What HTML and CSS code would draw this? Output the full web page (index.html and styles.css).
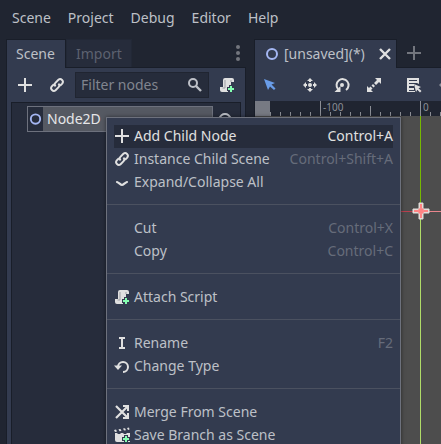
FILE: index.html
```html
<!DOCTYPE html>
<html lang="en">
<head>
<meta charset="utf-8">
<title>Scene editor</title>
<link rel="stylesheet" href="styles.css">
</head>
<body>
<svg class="sprite" aria-hidden="true">
  <symbol id="add" viewBox="0 0 16 16"><path d="M7 1v6H1v2h6v6h2V9h6V7H9V1z"/></symbol>
  <symbol id="link" viewBox="0 0 16 16"><g fill="none" stroke="currentColor" stroke-width="2"><path d="M6.600 9.400a2.700 2.700 0 0 1 0-3.800l2.800-2.800a2.700 2.700 0 0 1 3.800 3.800l-2.200 2.200"/><path d="M9.400 6.600a2.700 2.700 0 0 1 0 3.800l-2.800 2.800a2.700 2.700 0 0 1-3.800-3.800l2.200-2.200"/></g></symbol>
  <symbol id="search" viewBox="0 0 16 16"><g fill="none" stroke="currentColor" stroke-width="2"><circle cx="6" cy="6" r="4"/><path d="M9 9l5 5" stroke-width="2.400"/></g></symbol>
  <symbol id="script" viewBox="0 0 16 16"><path d="M6 1a2 2 0 0 0-2 2v7H1v3a2 2 0 0 0 2 2h6v-4h1V9h2V5h3V3a2 2 0 0 0-2-2z"/><path d="M6 3v8H3.500M12 3v2" fill="none" stroke="#9b9da3"/><path class="plus" d="M11 9h2v2h2v2h-2v2h-2v-2H9v-2h2z"/></symbol>
  <symbol id="ring" viewBox="0 0 16 16"><circle cx="8" cy="8" r="5" fill="none" stroke="#a5b7f3" stroke-width="2"/></symbol>
  <symbol id="eye" viewBox="0 0 16 16"><path d="M2 8q2-5 6-5t6 5q-2 5-6 5T2 8z" fill="none" stroke="currentColor" stroke-width="2"/><circle cx="8" cy="8" r="2"/></symbol>
  <symbol id="dots" viewBox="0 0 16 16"><circle cx="8" cy="2" r="2"/><circle cx="8" cy="8" r="2"/><circle cx="8" cy="14" r="2"/></symbol>
  <symbol id="close" viewBox="0 0 16 16"><path d="M3 3l10 10M13 3L3 13" fill="none" stroke="currentColor" stroke-width="2.400"/></symbol>
  <symbol id="select" viewBox="0 0 16 16"><path d="M2 2l4 11 2-3.500 4 3.500 1.500-1.500-4-4L13 6z"/></symbol>
  <symbol id="move" viewBox="0 0 16 16"><circle cx="8" cy="8" r="2"/><path d="M8 1l3 3H9v1H7V4H5zM8 15l3-3H9v-1H7v1H5zM1 8l3-3v2h1v2H4v2zM15 8l-3-3v2h-1v2h1v2z"/></symbol>
  <symbol id="rotate" viewBox="0 0 16 16"><path d="M12 13a6 6 0 1 0-8-1" fill="none" stroke="currentColor" stroke-width="2"/><path d="M6.500 9v6H.5z"/><circle cx="8" cy="8" r="2"/></symbol>
  <symbol id="scale" viewBox="0 0 16 16"><path d="M9 1h6v6l-2-2-3 3-2-2 3-3zM1 9v6h6l-2-2 1.500-1.500-2-2L3 11z"/><path d="M7 7l2 2-1.500 1.500-2-2z"/></symbol>
  <symbol id="list" viewBox="0 0 16 16"><path fill-rule="evenodd" d="M1 1h12v6l-2-1H3v1h5v2H3v2h5v2H3v1h6v1H1zM3 3v1h8V3z"/><path d="M8 7l7 3-2.500 1.200L15.500 14 14 15.500l-2.700-2.700L10 15z"/></symbol>
  <symbol id="chevron" viewBox="0 0 16 16"><path d="M3 8c2 .500 3.500 3 5 3s3-2.500 5-3" fill="none" stroke="currentColor" stroke-width="2.200" stroke-linecap="round"/></symbol>
  <symbol id="rename" viewBox="0 0 16 16"><path d="M5 2h6v2H9v8h2v2H5v-2h2V4H5z"/></symbol>
  <symbol id="reload" viewBox="0 0 16 16"><path d="M4 9a5 5 0 1 1 5 5" fill="none" stroke="currentColor" stroke-width="2"/><path d="M0 7.500h8l-4 4.500z"/></symbol>
  <symbol id="merge" viewBox="0 0 16 16"><path d="M2 2l11 11M2 14L13 3" fill="none" stroke="currentColor" stroke-width="2.200"/><path d="M9 1h6v6h-2V3H9zM15 9v6H9v-2h4V9z"/></symbol>
  <symbol id="clapper" viewBox="0 0 16 16"><path d="M0 3l2-.5 1 2-2 .5zM4.500 2.300l2-.4 1 2-2 .4zM9 1.600l2-.4 1 2-2 .4zM13 1l2-.4.500 2-1.500.4zM1 6h2l1 1h2l1-1h2l1 1h2l1-1h3v9H3a2 2 0 0 1-2-2z"/><path class="plus" d="M11 9h2v2h2v2h-2v2h-2v-2H9v-2h2z"/></symbol>
</svg>

<nav class="menubar" aria-label="Main">
  <button>Scene</button><button>Project</button><button>Debug</button><button>Editor</button><button>Help</button>
</nav>

<div class="workspace">
  <section class="dock">
    <div class="tabs">
      <button class="tab active first">Scene</button>
      <button class="tab idle">Import</button>
      <button class="dock-menu" aria-label="Dock options"><svg class="icon"><use href="#dots"/></svg></button>
    </div>
    <div class="panel dock-panel">
      <div class="dock-tools">
        <button class="tool" aria-label="Add node"><svg class="icon"><use href="#add"/></svg></button>
        <button class="tool" aria-label="Instance scene"><svg class="icon"><use href="#link"/></svg></button>
        <label class="filter"><input type="text" placeholder="Filter nodes" aria-label="Filter nodes"><svg class="icon"><use href="#search"/></svg></label>
        <button class="tool" aria-label="Attach script"><svg class="icon"><use href="#script"/></svg></button>
      </div>
      <div class="tree">
        <div class="tree-row">
          <button class="node"><svg class="icon"><use href="#ring"/></svg><span>Node2D</span></button>
          <button class="visibility" aria-label="Toggle visibility"><svg class="icon"><use href="#eye"/></svg></button>
        </div>
      </div>
    </div>
  </section>

  <section class="editor">
    <div class="tabs">
      <div class="tab active document"><svg class="icon"><use href="#ring"/></svg><span>[unsaved](*)</span><button class="close" aria-label="Close scene"><svg class="icon"><use href="#close"/></svg></button></div>
      <button class="new-tab" aria-label="New scene"><svg class="icon"><use href="#add"/></svg></button>
    </div>
    <div class="panel editor-panel">
      <div class="editor-tools">
        <button class="tool pressed" aria-label="Select"><svg class="icon"><use href="#select"/></svg></button>
        <span class="divider"></span>
        <button class="tool" aria-label="Move"><svg class="icon"><use href="#move"/></svg></button>
        <button class="tool" aria-label="Rotate"><svg class="icon"><use href="#rotate"/></svg></button>
        <button class="tool" aria-label="Scale"><svg class="icon"><use href="#scale"/></svg></button>
        <span class="divider"></span>
        <button class="tool" aria-label="List select"><svg class="icon"><use href="#list"/></svg></button>
        <button class="tool" aria-label="Pivot"><svg class="icon faint"><use href="#move"/></svg></button>
      </div>
      <div class="ruler">
        <span class="corner"></span>
        <svg class="scale">
          <defs><pattern id="ticks" width="10" height="15" patternUnits="userSpaceOnUse"><path d="M0 11h1v4H0z"/></pattern></defs>
          <rect width="100%" height="15" fill="url(#ticks)"/>
          <path d="M50 0h1v15h-1zM100 5h1v10h-1zM150 0h1v15h-1z"/>
          <text x="53" y="10">-100</text><text x="153" y="10">0</text>
        </svg>
      </div>
      <svg class="canvas">
        <rect x="165" y="0" width="1" height="95" fill="#76b900"/>
        <rect x="165" y="95" width="1" height="100%" fill="#b0dc68"/>
        <rect x="0" y="95" width="165" height="1" fill="#b8404e"/>
        <rect x="166" y="95" width="100%" height="1" fill="#e8858c"/>
        <path d="M164 87h4v16h-4zM158 93h16v4h-16z" fill="#e2dcd8" stroke="#e2dcd8"/>
        <path d="M165 88h2v4h-2zM165 98h2v4h-2zM159 94h4v2h-4zM169 94h4v2h-4z" fill="#ff8484"/>
        <circle cx="166" cy="95" r="3" fill="#ff8484"/>
      </svg>
    </div>
  </section>
</div>

<div class="context-menu" role="menu">
  <button class="item hover" role="menuitem"><svg class="icon"><use href="#add"/></svg><span>Add Child Node</span><kbd>Control+A</kbd></button>
  <button class="item" role="menuitem"><svg class="icon"><use href="#link"/></svg><span>Instance Child Scene</span><kbd>Control+Shift+A</kbd></button>
  <button class="item" role="menuitem"><svg class="icon"><use href="#chevron"/></svg><span>Expand/Collapse All</span></button>
  <hr>
  <button class="item" role="menuitem"><i class="icon"></i><span>Cut</span><kbd>Control+X</kbd></button>
  <button class="item" role="menuitem"><i class="icon"></i><span>Copy</span><kbd>Control+C</kbd></button>
  <hr>
  <button class="item" role="menuitem"><svg class="icon"><use href="#script"/></svg><span>Attach Script</span></button>
  <hr>
  <button class="item" role="menuitem"><svg class="icon"><use href="#rename"/></svg><span>Rename</span><kbd>F2</kbd></button>
  <button class="item" role="menuitem"><svg class="icon"><use href="#reload"/></svg><span>Change Type</span></button>
  <hr>
  <button class="item" role="menuitem"><svg class="icon"><use href="#merge"/></svg><span>Merge From Scene</span></button>
  <button class="item" role="menuitem"><svg class="icon"><use href="#clapper"/></svg><span>Save Branch as Scene</span></button>
</div>
</body>
</html>
```
FILE: styles.css
```css
* { box-sizing: border-box; }

body {
  margin: 0;
  height: 100vh;
  overflow: hidden;
  display: flex;
  flex-direction: column;
  background: #202531;
  color: #bdc0c7;
  font: 14px/22px "Noto Sans", sans-serif;
}

button, input {
  margin: 0;
  padding: 0;
  border: 0;
  background: none;
  color: inherit;
  font: inherit;
  text-align: left;
  white-space: nowrap;
}

.sprite { display: none; }
.icon { display: block; flex: none; width: 16px; height: 16px; fill: currentColor; }
.plus { fill: #84ffb1; stroke: #333b4f; stroke-width: 2; paint-order: stroke; }

.menubar { display: flex; flex: none; gap: 17px; height: 39px; padding: 7px 12px 10px; }

.workspace { flex: 1; min-height: 0; display: flex; gap: 8px; margin-bottom: -8px; padding-left: 6px; }
.dock { flex: none; width: 240px; display: flex; flex-direction: column; }
.editor { flex: 1; min-width: 0; display: flex; flex-direction: column; }

.tabs { display: flex; flex: none; height: 28px; align-items: stretch; }
.tab { padding: 0 9px; border: 1px solid #191e29; border-bottom: 0; }
.tab.active { position: relative; margin-bottom: -1px; background: #333b4f; }
.tab.idle { background: #262c3b; color: #5d6270; border-color: #222836; }
.tab.first { width: 60px; }
.dock-menu { margin-left: auto; color: #73767e; }
.tab.document { display: flex; align-items: center; gap: 4px; width: 143px; padding-right: 3px; }
.close { margin-left: auto; color: #e0e0e0; }
.new-tab { padding: 0 9px; color: #73767e; }

.panel { flex: 1; min-height: 0; display: flex; flex-direction: column; background: #333b4f; border: 1px solid #191e29; }
.tool { flex: none; color: #e0e0e0; }

.dock-panel { padding: 4px; }
.dock-tools { display: flex; flex: none; align-items: center; gap: 16px; height: 26px; padding: 0 6px; }
.filter { flex: 1; min-width: 0; display: flex; align-items: center; height: 26px; margin: 0 -6px; padding: 0 5px; background: #262c3b; border: 1px solid #202531; color: #bdc0c7; }
.filter input { flex: 1; min-width: 0; outline: 0; }
.filter input::placeholder { color: #81858f; opacity: 1; }

.tree { flex: 1; margin-top: 4px; padding: 3px 7px 0 15px; background: #262c3b; border: 1px solid #191e29; }
.tree-row { display: flex; align-items: center; gap: 4px; height: 26px; }
.node { flex: 1; display: flex; align-items: center; height: 26px; border: 1px solid #6d717d; background: #555962; color: #e6e6e8; }
.node .icon { width: 15px; height: 24px; background: #262c3b; }
.node span { padding-left: 4px; }
.visibility { color: #bdc0c7; }

.editor-panel { border-right: 0; }
.editor-tools { display: flex; flex: none; align-items: center; gap: 16px; height: 33px; padding-left: 7px; }
.pressed { color: #699ce8; }
.divider { width: 1px; height: 26px; margin: 0 -4px; background: #4b5160; }
.faint { opacity: 0.5; }

.ruler { display: flex; flex: none; height: 15px; background: #202531; }
.corner { width: 15px; background: #777a83; }
.scale { flex: 1; min-width: 0; height: 15px; fill: #8b8e95; font-size: 10px; }
.canvas { flex: 1; width: 100%; min-height: 0; background: #4d4d4d; }

.context-menu {
  position: absolute;
  left: 106px;
  top: 117px;
  width: 295px;
  padding: 7px;
  background: #333b4f;
  border: 1px solid #6d717d;
  box-shadow: 0 0 4px rgba(0, 0, 0, 0.5);
}
.item { display: flex; align-items: center; gap: 4px; width: 100%; height: 23px; padding-bottom: 2px; }
.item .icon { color: #e0e0e0; }
.item.hover { background: #262c3b; color: #e0e0e0; }
.item kbd { margin-left: auto; font: inherit; color: #666c7a; }
.item.hover kbd { color: #e0e0e0; }
.context-menu hr { height: 1px; margin: 10px -7px 12px; border: 0; background: #4b5160; }
```
